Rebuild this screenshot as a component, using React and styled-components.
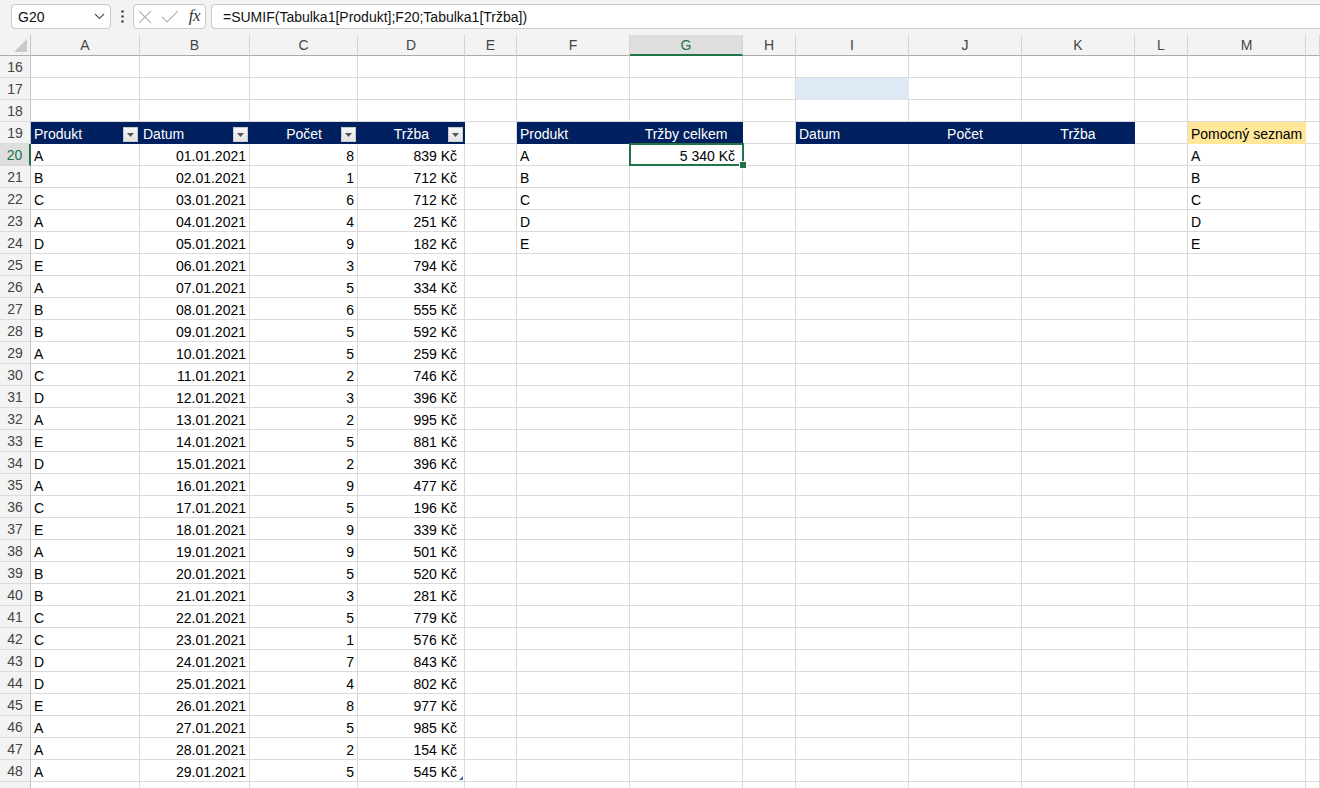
import React from "react";
import styled, { createGlobalStyle } from "styled-components";

const COLS = "31px 109px 110px 108px 107px 52px 113px 113px 53px 113px 113px 113px 53px 118px 1fr";
const LETTERS = ["A", "B", "C", "D", "E", "F", "G", "H", "I", "J", "K", "L", "M", "N"];
const NAVY = "#002060";
const GREEN = "#217346";
const GRID = "#dadada";

const SALES = [
  ["A", 8, 839], ["B", 1, 712], ["C", 6, 712], ["A", 4, 251], ["D", 9, 182],
  ["E", 3, 794], ["A", 5, 334], ["B", 6, 555], ["B", 5, 592], ["A", 5, 259],
  ["C", 2, 746], ["D", 3, 396], ["A", 2, 995], ["E", 5, 881], ["D", 2, 396],
  ["A", 9, 477], ["C", 5, 196], ["E", 9, 339], ["A", 9, 501], ["B", 5, 520],
  ["B", 3, 281], ["C", 5, 779], ["C", 1, 576], ["D", 7, 843], ["D", 4, 802],
  ["E", 8, 977], ["A", 5, 985], ["A", 2, 154], ["A", 5, 545]
];
const PRODUCTS = ["A", "B", "C", "D", "E"];

const pad = n => String(n).padStart(2, "0");

// builds the content of one sheet row, keyed by column letter
const cellsFor = r => {
  const c = {};
  if (r === 17) c.I = { fill: "#dde9f5" };
  if (r === 19) {
    c.A = { text: "Produkt", head: true, filter: true };
    c.B = { text: "Datum", head: true, filter: true };
    c.C = { text: "Počet", head: true, filter: true, align: "right" };
    c.D = { text: "Tržba", head: true, filter: true, align: "right" };
    c.F = { text: "Produkt", head: true };
    c.G = { text: "Tržby celkem", head: true, align: "center" };
    c.I = { text: "Datum", head: true };
    c.J = { text: "Počet", head: true, align: "center" };
    c.K = { text: "Tržba", head: true, align: "center" };
    c.M = { text: "Pomocný seznam", fill: "#ffe699" };
  }
  const i = r - 20;
  if (i >= 0 && i < SALES.length) {
    const [p, n, t] = SALES[i];
    c.A = { text: p };
    c.B = { text: `${pad(i + 1)}.01.2021`, align: "right" };
    c.C = { text: String(n), align: "right" };
    c.D = { text: `${t} Kč`, align: "right", pr: 7, corner: i === SALES.length - 1 };
  }
  if (i >= 0 && i < PRODUCTS.length) {
    c.F = { text: PRODUCTS[i] };
    c.M = { text: PRODUCTS[i] };
  }
  if (r === 20) c.G = { text: "5 340 Kč", align: "right", pr: 7, selected: true };
  return c;
};

// row 49 only peeks in at the bottom edge, its number is out of view
const ROWS = Array.from({ length: 34 }, (_, k) => 16 + k);
const LAST_VISIBLE = 48;

const GlobalStyle = createGlobalStyle`
  html, body {
    margin: 0;
    padding: 0;
    background: #fff;
    overflow: hidden;
  }
  body {
    font-family: "Liberation Sans", Arial, sans-serif;
  }
`;

const Page = styled.div`
  width: 1320px;
  height: 788px;
  overflow: hidden;
  background: #fff;
`;

const TopBar = styled.div`
  height: 35px;
  box-sizing: border-box;
  background: #f3f3f3;
  display: flex;
  align-items: flex-start;
  padding: 4px 0 0 11px;
`;

const Box = styled.div`
  box-sizing: border-box;
  height: 25px;
  background: #fff;
  border: 1px solid #c9c9c9;
  border-radius: 4px;
  display: flex;
  align-items: center;
`;

const NameBox = styled(Box)`
  width: 100px;
  padding: 0 5px 0 6px;
  justify-content: space-between;
  font-size: 14px;
  color: #111;
`;

const Dots = styled.div`
  width: 22px;
  display: flex;
  justify-content: center;
  padding-top: 6px;
`;

const FuncBox = styled(Box)`
  width: 73px;
  padding: 0 5px 0 4px;
  justify-content: space-between;
`;

const Fx = styled.span`
  font-family: "Liberation Serif", "Times New Roman", serif;
  font-style: italic;
  font-size: 17px;
  color: #333;
  letter-spacing: -0.5px;
  padding-bottom: 2px;
`;

const FormulaBox = styled(Box)`
  flex: 1;
  margin: 0 -12px 0 5px;
  padding-left: 11px;
  font-size: 14px;
  color: #111;
`;

const SheetRow = styled.div`
  display: grid;
  grid-template-columns: ${COLS};
`;

const Corner = styled.div`
  box-sizing: border-box;
  height: 21px;
  background: #f3f3f3;
  border-right: 1px solid #c6c6c6;
  border-bottom: 1px solid #ababab;
  display: flex;
  align-items: flex-end;
  justify-content: flex-end;
  padding: 0 3px 3px 0;
`;

const ColHead = styled.div`
  box-sizing: border-box;
  height: 21px;
  background: ${p => (p.$active ? "#dedede" : "#f3f3f3")};
  color: ${p => (p.$active ? GREEN : "#444")};
  border-right: 1px solid #d4d4d4;
  border-bottom: ${p => (p.$active ? `2px solid ${GREEN}` : "1px solid #ababab")};
  font-size: 14px;
  line-height: 21px;
  text-align: center;
`;

const RowHead = styled.div`
  box-sizing: border-box;
  height: 22px;
  padding-top: 1px;
  background: ${p => (p.$active ? "#dedede" : "#f3f3f3")};
  color: ${p => (p.$active ? GREEN : "#444")};
  border-right: ${p => (p.$active ? `2px solid ${GREEN}` : "1px solid #c6c6c6")};
  border-bottom: 1px solid #dadada;
  font-size: 14px;
  line-height: 21px;
  text-align: center;
`;

const justify = { left: "flex-start", right: "flex-end", center: "center" };

const Cell = styled.div`
  position: relative;
  box-sizing: border-box;
  height: 22px;
  background: ${p => p.$fill || "#fff"};
  color: ${p => p.$ink || "#000"};
  border-right: 1px solid ${p => p.$fill || GRID};
  border-bottom: 1px solid ${p => p.$fill || GRID};
  display: flex;
  align-items: center;
  justify-content: ${p => justify[p.$align || "left"]};
  padding: 2px ${p => p.$pr}px 0 3px;
  font-size: 14px;
  line-height: 20px;
  white-space: nowrap;
`;

const FilterBtn = styled.span`
  box-sizing: border-box;
  width: 15px;
  height: 15px;
  margin-left: ${p => (p.$after ? "19px" : "auto")};
  margin-top: 2px;
  background: linear-gradient(#f7f7f7, #e4e4e4);
  border: 1px solid #c9c9c9;
  display: flex;
  align-items: center;
  justify-content: center;
`;

const Selection = styled.span`
  position: absolute;
  top: -1px;
  left: -1px;
  right: -2px;
  bottom: -1px;
  border: 2px solid ${GREEN};
  pointer-events: none;
  z-index: 2;
`;

const Handle = styled.span`
  position: absolute;
  right: -5px;
  bottom: -5px;
  width: 6px;
  height: 6px;
  background: ${GREEN};
  border: 1px solid #fff;
`;

const ResizeMark = styled.svg`
  position: absolute;
  right: 1px;
  bottom: 1px;
`;

const Chevron = () => (
  <svg width="11" height="7" viewBox="0 0 11 7">
    <path d="M1 1l4.5 4.5L10 1" fill="none" stroke="#555" strokeWidth="1.2" />
  </svg>
);

const Triangle = () => (
  <svg width="7" height="4" viewBox="0 0 7 4">
    <path d="M0 0h7L3.5 4z" fill="#555" />
  </svg>
);

const Formula = () => (
  <TopBar>
    <NameBox>
      <span>G20</span>
      <Chevron />
    </NameBox>
    <Dots>
      <svg width="3" height="13" viewBox="0 0 3 13">
        <circle cx="1.5" cy="1.5" r="1.3" fill="#444" />
        <circle cx="1.5" cy="6.5" r="1.3" fill="#444" />
        <circle cx="1.5" cy="11.5" r="1.3" fill="#444" />
      </svg>
    </Dots>
    <FuncBox>
      <svg width="14" height="14" viewBox="0 0 14 14">
        <path d="M1 1l12 12M13 1L1 13" stroke="#b5b5b5" strokeWidth="1.1" />
      </svg>
      <svg width="18" height="14" viewBox="0 0 18 14">
        <path d="M1 7l5 5L17 1" fill="none" stroke="#b5b5b5" strokeWidth="1.1" />
      </svg>
      <Fx>fx</Fx>
    </FuncBox>
    <FormulaBox>=SUMIF(Tabulka1[Produkt];F20;Tabulka1[Tržba])</FormulaBox>
  </TopBar>
);

const HeaderRow = () => (
  <SheetRow>
    <Corner>
      <svg width="13" height="13" viewBox="0 0 13 13">
        <path d="M13 0v13H0z" fill="#c8c8c8" />
      </svg>
    </Corner>
    {LETTERS.map(l => (
      <ColHead key={l} $active={l === "G"}>
        {l === "N" ? "" : l}
      </ColHead>
    ))}
  </SheetRow>
);

const DataRow = ({ r }) => {
  const cells = cellsFor(r);
  return (
    <SheetRow>
      <RowHead $active={r === 20}>{r <= LAST_VISIBLE ? r : ""}</RowHead>
      {LETTERS.map(l => {
        const c = cells[l] || {};
        const fill = c.head ? NAVY : c.fill;
        return (
          <Cell
            key={l}
            $fill={fill}
            $ink={c.head ? "#fff" : undefined}
            $align={c.align}
            $pr={c.filter ? 1 : c.pr ?? 3}
          >
            {c.text}
            {c.filter && (
              <FilterBtn $after={c.align === "right"}>
                <Triangle />
              </FilterBtn>
            )}
            {c.selected && (
              <Selection>
                <Handle />
              </Selection>
            )}
            {c.corner && (
              <ResizeMark width="4" height="4" viewBox="0 0 4 4">
                <path d="M4 0v4H0z" fill="#4a66ac" />
              </ResizeMark>
            )}
          </Cell>
        );
      })}
    </SheetRow>
  );
};

const App = () => (
  <Page>
    <GlobalStyle />
    <Formula />
    <HeaderRow />
    {ROWS.map(r => (
      <DataRow key={r} r={r} />
    ))}
  </Page>
);

export default App;
